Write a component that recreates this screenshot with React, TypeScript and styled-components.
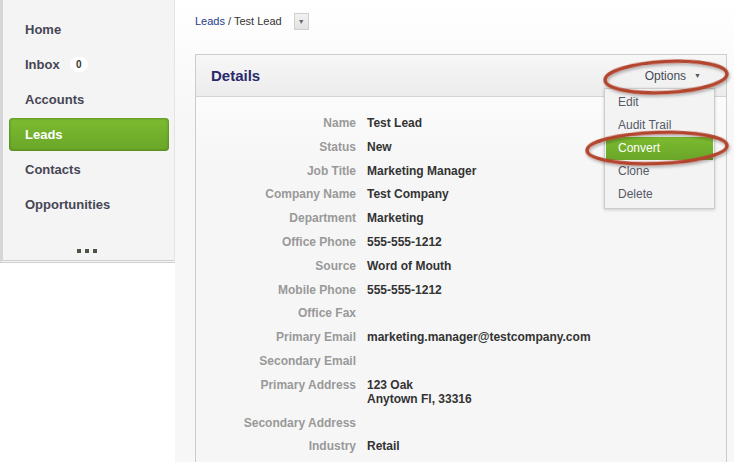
import React from 'react';
import styled, { createGlobalStyle } from 'styled-components';

const GlobalStyle = createGlobalStyle`
  html, body {
    margin: 0;
    padding: 0;
    background: #ffffff;
  }
  body {
    font-family: "Liberation Sans", Arial, sans-serif;
    font-size: 12px;
    color: #333;
  }
`;

const Page = styled.div`
  position: relative;
  display: flex;
  width: 734px;
  height: 462px;
  overflow: hidden;
`;

const SideColumn = styled.div`
  width: 175px;
  flex-shrink: 0;
  display: flex;
  flex-direction: column;
`;

const Sidebar = styled.nav`
  display: flex;
  flex-direction: column;
  gap: 2px;
  height: 263px;
  box-sizing: border-box;
  padding: 13px 5px 0 6px;
  background: #f4f4f4;
  border-left: 3px solid #d6d6d6;
  border-right: 1px solid #e4e4e4;
  border-bottom: 3px double #cfcfcf;
`;

const NavItem = styled.a<{ $active?: boolean }>`
  display: flex;
  align-items: center;
  gap: 10px;
  height: 33px;
  padding-left: 16px;
  border-radius: 4px;
  font-size: 13px;
  font-weight: bold;
  color: ${(p) => (p.$active ? '#ffffff' : '#464654')};
  background: ${(p) =>
    p.$active ? 'linear-gradient(#7cbb30, #6aa628)' : 'transparent'};
  box-shadow: ${(p) =>
    p.$active ? 'inset 0 0 3px rgba(40, 70, 10, 0.6)' : 'none'};
  text-decoration: none;
`;

const Badge = styled.span`
  display: inline-flex;
  align-items: center;
  justify-content: center;
  min-width: 18px;
  height: 15px;
  border-radius: 8px;
  background: #ffffff;
  color: #333;
  font-size: 10px;
  font-weight: bold;
`;

const More = styled.div`
  display: flex;
  justify-content: center;
  gap: 4px;
  margin-top: 26px;
  padding-right: 4px;
`;

const Dot = styled.span`
  width: 4px;
  height: 4px;
  background: #4a5548;
`;

const Main = styled.main`
  flex: 1;
  display: flex;
  flex-direction: column;
  padding: 12px 7px 0 20px;
  background: linear-gradient(#ffffff, #f7f7f7 120px, #f7f7f7);
`;

const Breadcrumb = styled.div`
  display: flex;
  align-items: center;
  height: 18px;
  font-size: 11px;
  color: #333;
`;

const CrumbLink = styled.a`
  color: #1f3c88;
  text-decoration: none;
`;

const CrumbButton = styled.span`
  display: inline-flex;
  align-items: center;
  justify-content: center;
  width: 13px;
  height: 15px;
  margin-left: 12px;
  background: linear-gradient(#f2f2f2, #e2e2e2);
  border: 1px solid #cfcfcf;
  color: #666;
  font-size: 7px;
`;

const Panel = styled.section`
  margin-top: 24px;
  flex: 1;
  border: 1px solid #cccccc;
  border-bottom: none;
  background: linear-gradient(#ffffff, #f6f6f6 110px, #f6f6f6);
`;

const PanelHeader = styled.header`
  display: flex;
  align-items: center;
  justify-content: space-between;
  height: 41px;
  padding: 0 11px 0 15px;
  background: linear-gradient(#f7f7f7, #ececec);
  border-bottom: 1px solid #d4d4d4;
`;

const Title = styled.h2`
  margin: 0;
  font-size: 15px;
  font-weight: bold;
  color: #29296b;
`;

const OptionsWrap = styled.div`
  position: relative;
`;

const OptionsButton = styled.button`
  display: flex;
  align-items: center;
  gap: 8px;
  height: 22px;
  padding: 0 14px 0 13px;
  border: none;
  background: #f2f2f2;
  font-family: "Liberation Sans", Arial, sans-serif;
  font-size: 12px;
  color: #454a55;
`;

const Caret = styled.span`
  font-size: 7px;
  color: #555;
`;

const Menu = styled.ul`
  position: absolute;
  top: 23px;
  right: 0;
  width: 107px;
  margin: 0;
  padding: 2px 1px;
  list-style: none;
  background: #f3f3f3;
  border: 1px solid #cccccc;
  box-shadow: 0 1px 3px rgba(0, 0, 0, 0.18);
  z-index: 2;
`;

const MenuItem = styled.li<{ $active?: boolean }>`
  display: flex;
  align-items: center;
  height: 23px;
  padding-left: 12px;
  font-size: 12px;
  color: ${(p) => (p.$active ? '#ffffff' : '#555a66')};
  background: ${(p) =>
    p.$active ? 'linear-gradient(#7cbb30, #6aa628)' : 'transparent'};
`;

const Fields = styled.dl`
  display: grid;
  grid-template-columns: 160px 1fr;
  column-gap: 11px;
  row-gap: 9.8px;
  margin: 0;
  padding: 19px 0 0 0;
  line-height: 14px;
  font-size: 12px;
  font-weight: bold;
`;

const Label = styled.dt`
  text-align: right;
  color: #999999;
`;

const Value = styled.dd`
  margin: 0;
  color: #333333;
`;

const Annotations = styled.svg`
  position: absolute;
  left: 0;
  top: 0;
  pointer-events: none;
  z-index: 5;
`;

const nav = ['Home', 'Inbox', 'Accounts', 'Leads', 'Contacts', 'Opportunities'];

const fields: [string, React.ReactNode][] = [
  ['Name', 'Test Lead'],
  ['Status', 'New'],
  ['Job Title', 'Marketing Manager'],
  ['Company Name', 'Test Company'],
  ['Department', 'Marketing'],
  ['Office Phone', '555-555-1212'],
  ['Source', 'Word of Mouth'],
  ['Mobile Phone', '555-555-1212'],
  ['Office Fax', ''],
  ['Primary Email', 'marketing.manager@testcompany.com'],
  ['Secondary Email', ''],
  [
    'Primary Address',
    <>
      123 Oak
      <br />
      Anytown Fl, 33316
    </>,
  ],
  ['Secondary Address', ''],
  ['Industry', 'Retail'],
];

const menu = ['Edit', 'Audit Trail', 'Convert', 'Clone', 'Delete'];

export default function App() {
  return (
    <Page>
      <GlobalStyle />
      <SideColumn>
        <Sidebar>
          {nav.map((n) => (
            <NavItem key={n} $active={n === 'Leads'}>
              {n}
              {n === 'Inbox' && <Badge>0</Badge>}
            </NavItem>
          ))}
          <More>
            <Dot />
            <Dot />
            <Dot />
          </More>
        </Sidebar>
      </SideColumn>
      <Main>
        <Breadcrumb>
          <CrumbLink>Leads</CrumbLink>&nbsp;/ Test Lead
          <CrumbButton>▼</CrumbButton>
        </Breadcrumb>
        <Panel>
          <PanelHeader>
            <Title>Details</Title>
            <OptionsWrap>
              <OptionsButton>
                Options <Caret>▼</Caret>
              </OptionsButton>
              <Menu>
                {menu.map((m) => (
                  <MenuItem key={m} $active={m === 'Convert'}>
                    {m}
                  </MenuItem>
                ))}
              </Menu>
            </OptionsWrap>
          </PanelHeader>
          <Fields>
            {fields.map(([label, value]) => (
              <React.Fragment key={label}>
                <Label>{label}</Label>
                <Value>{value || '\u00a0'}</Value>
              </React.Fragment>
            ))}
          </Fields>
        </Panel>
      </Main>
      <Annotations width="734" height="462">
        <defs>
          <filter id="shade" x="-10%" y="-30%" width="120%" height="160%">
            <feDropShadow dx="1" dy="2" stdDeviation="1.5" floodColor="#000" floodOpacity="0.3" />
          </filter>
        </defs>
        <ellipse
          cx="666"
          cy="77"
          rx="61"
          ry="15.5"
          fill="none"
          stroke="#b3442e"
          strokeWidth="3.5"
          transform="rotate(-3 666 77)"
          filter="url(#shade)"
        />
        <ellipse
          cx="657"
          cy="148"
          rx="70"
          ry="15.5"
          fill="none"
          stroke="#b3442e"
          strokeWidth="3.5"
          transform="rotate(-2 657 148)"
          filter="url(#shade)"
        />
      </Annotations>
    </Page>
  );
}
